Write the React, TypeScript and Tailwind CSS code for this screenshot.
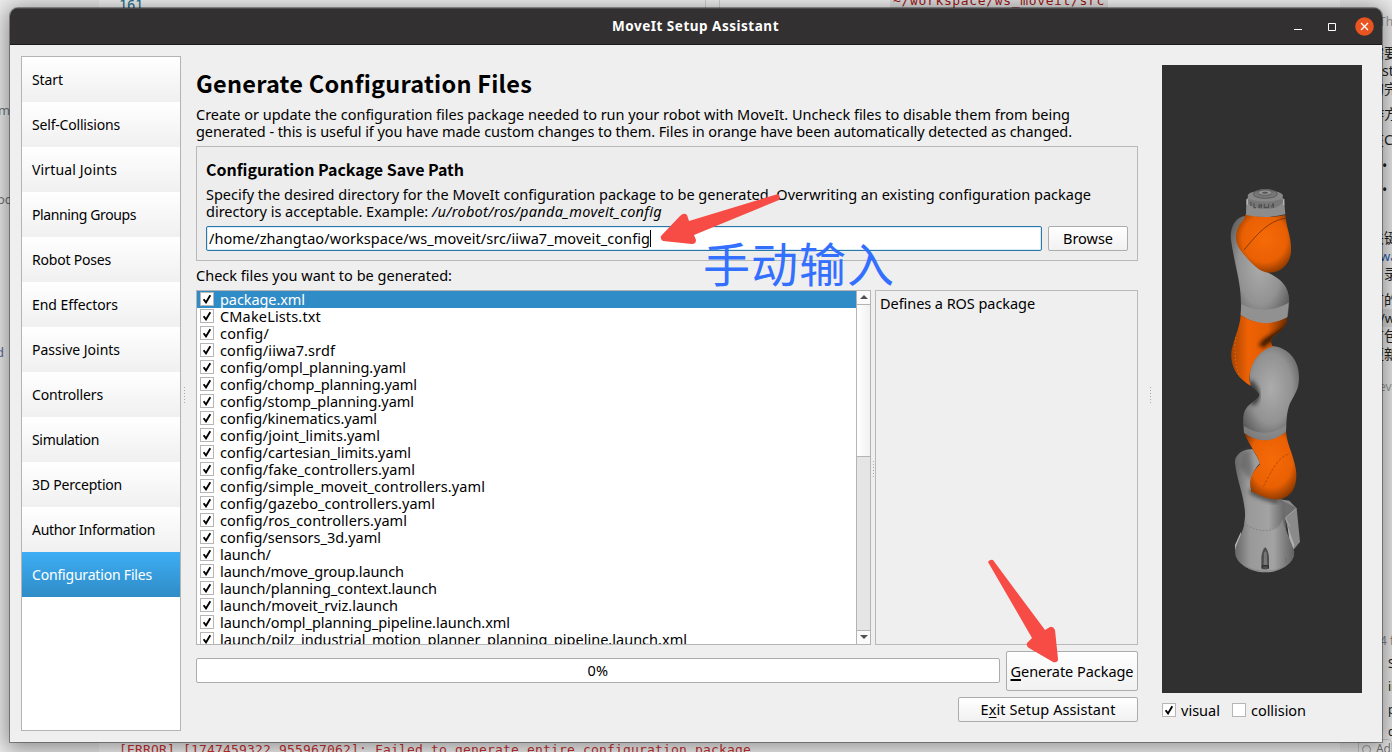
import { useLayoutEffect, useRef, useState, type ReactNode } from "react";

/** A single line of text tracked so that it fills the given width. */
function Line({ w, className = "", children }: { w: number; className?: string; children: ReactNode }) {
  const ref = useRef<HTMLSpanElement>(null);
  const [spacing, setSpacing] = useState(0);
  useLayoutEffect(() => {
    const el = ref.current;
    if (!el) return;
    const count = (el.textContent ?? "").length;
    setSpacing((w - el.getBoundingClientRect().width) / count);
  }, [w]);
  return (
    <span ref={ref} className={`inline-block shrink-0 whitespace-pre ${className}`} style={{ letterSpacing: `${spacing}px` }}>
      {children}
    </span>
  );
}

const steps: [string, number][] = [
  ["Start", 31],
  ["Self-Collisions", 88],
  ["Virtual Joints", 85],
  ["Planning Groups", 104],
  ["Robot Poses", 79],
  ["End Effectors", 86],
  ["Passive Joints", 88],
  ["Controllers", 71],
  ["Simulation", 67],
  ["3D Perception", 90],
  ["Author Information", 123],
  ["Configuration Files", 120],
];

const files: [string, number][] = [
  ["package.xml", 85],
  ["CMakeLists.txt", 101],
  ["config/", 49],
  ["config/iiwa7.srdf", 115],
  ["config/ompl_planning.yaml", 186],
  ["config/chomp_planning.yaml", 197],
  ["config/stomp_planning.yaml", 194],
  ["config/kinematics.yaml", 157],
  ["config/joint_limits.yaml", 160],
  ["config/cartesian_limits.yaml", 191],
  ["config/fake_controllers.yaml", 195],
  ["config/simple_moveit_controllers.yaml", 265],
  ["config/gazebo_controllers.yaml", 215],
  ["config/ros_controllers.yaml", 187],
  ["config/sensors_3d.yaml", 161],
  ["launch/", 51],
  ["launch/move_group.launch", 184],
  ["launch/planning_context.launch", 217],
  ["launch/moveit_rviz.launch", 178],
  ["launch/ompl_planning_pipeline.launch.xml", 290],
  ["launch/pilz_industrial_motion_planner_planning_pipeline.launch.xml", 467],
];

function Check({ on = true }: { on?: boolean }) {
  return (
    <span className="flex h-[14px] w-[14px] shrink-0 items-center justify-center border border-[#b6b6b6] bg-white">
      {on && (
        <svg width="10" height="10" viewBox="0 0 10 10" fill="none">
          <path d="M1.6 5.2 L4 8.4 L8.3 1.2" stroke="#000" strokeWidth="1.9" />
        </svg>
      )}
    </span>
  );
}

function Grip({ className }: { className: string }) {
  return (
    <span className={`flex flex-col gap-[2px] ${className}`}>
      {[0, 1, 2, 3, 4, 5].map((i) => (
        <i key={i} className="h-px w-px bg-[#a8a8a8]" />
      ))}
    </span>
  );
}

function Robot() {
  return (
    <svg width="200" height="628" viewBox="0 0 200 628" className="block">
      <defs>
        <linearGradient id="metal" x1="0" x2="1">
          <stop offset="0" stopColor="#666" />
          <stop offset=".25" stopColor="#999" />
          <stop offset=".65" stopColor="#a3a3a3" />
          <stop offset="1" stopColor="#606060" />
        </linearGradient>
        <radialGradient id="dome" cx=".5" cy=".45" r=".62">
          <stop offset="0" stopColor="#acacac" />
          <stop offset=".6" stopColor="#929292" />
          <stop offset="1" stopColor="#595959" />
        </radialGradient>
        <radialGradient id="head" cx=".52" cy=".42" r=".62">
          <stop offset="0" stopColor="#f76a08" />
          <stop offset=".65" stopColor="#e96003" />
          <stop offset="1" stopColor="#833500" />
        </radialGradient>
        <linearGradient id="sleeve" x1="0" x2="1">
          <stop offset="0" stopColor="#a84300" />
          <stop offset=".3" stopColor="#ef6204" />
          <stop offset=".65" stopColor="#e25c02" />
          <stop offset="1" stopColor="#6b2c00" />
        </linearGradient>
        <filter id="soft" x="-40%" y="-40%" width="180%" height="180%">
          <feGaussianBlur stdDeviation="7" />
        </filter>
        <clipPath id="c2"><path d="M122 405 Q190 450 262 412 C262 440 240 455 225 465 C212 475 210 485 218 500 C180 510 150 545 148 600 L152 618 C110 592 88 555 95 510 C104 470 120 440 122 405 Z" /></clipPath>
        <clipPath id="c3"><path d="M218 498 C265 503 297 540 297 590 C297 630 285 640 270 670 C258 700 260 730 258 755 Q195 805 132 758 C127 720 128 695 142 680 C160 662 181 655 178 642 C170 628 155 620 150 610 C143 560 165 510 218 498 Z" /></clipPath>
      </defs>
      <rect width="200" height="628" fill="#303030" />
      <g transform="translate(38 115) scale(.33333)">
        <path d="M240 958 L268 962 L290 985 L300 1085 L282 1108 L255 1015 Z" fill="#8a8a8a" />
        <path d="M240 958 L290 985 L256 1014 Z" fill="#6e6e6e" />
        <path d="M288 986 L256 1014 L270 1040" fill="none" stroke="#a8a8a8" strokeWidth="3" />
        <path d="M262 1035 L283 1095 L280 1110 L268 1080 Z" fill="#b0b0b0" />
        <path d="M123 1055 L105 1095 L106 1113 L122 1080 Z" fill="#bcbcbc" />
        <path d="M158 808 C130 806 101 825 105 850 C110 900 137 960 135 1010 L130 1060 L260 1060 C255 1010 255 985 235 950 L155 935 C145 900 160 870 180 850 C175 835 165 820 158 808 Z" fill="url(#metal)" />
        <path d="M158 808 C140 830 172 860 150 900 L120 860 L125 815 Z" fill="#5a5a5a" filter="url(#soft)" opacity=".6" />
        <path d="M150 932 Q200 960 235 962" stroke="#444" strokeWidth="14" fill="none" filter="url(#soft)" />
        <path d="M135 1022 C130 1060 110 1080 105 1115 C108 1150 150 1177 197 1177 C240 1177 282 1150 283 1115 C272 1080 255 1050 247 1018 Q240 1050 195 1051 Q148 1050 135 1022 Z" fill="url(#metal)" />
        <path d="M107 1125 Q120 1170 197 1174 Q270 1170 282 1125" stroke="#797979" strokeWidth="2" fill="none" />
        <path d="M140 1036 Q195 1066 240 1038" stroke="#777" strokeWidth="2" strokeDasharray="6 4" fill="none" />
        <path d="M184 1165 L184 1130 Q188 1106 196 1102 Q205 1110 207 1132 L207 1165 Q195 1172 184 1165 Z" fill="#4d4d4d" />
        <path d="M191 1155 L192 1118 Q197 1108 200 1120 L202 1155 Z" fill="#777" />
        <path d="M187 1166 V1157 H205 V1166" fill="none" stroke="#292929" strokeWidth="3" />
        <path d="M256 1133 Q261 1142 257 1149" fill="none" stroke="#666" strokeWidth="2" />
        <path d="M132 758 Q195 800 258 755 C262 800 280 820 288 870 C293 915 280 948 240 958 C210 963 180 945 155 935 C145 905 152 880 180 853 C180 835 150 800 132 758 Z" fill="url(#head)" />
        <path d="M190 920 L200 900 C220 865 235 830 270 821" stroke="#a44300" strokeWidth="2" strokeDasharray="9 4" fill="none" />
        <path d="M218 498 C265 503 297 540 297 590 C297 630 285 640 270 670 C258 700 260 730 258 755 Q195 805 132 758 C127 720 128 695 142 680 C160 662 181 655 178 642 C170 628 155 620 150 610 C143 560 165 510 218 498 Z" fill="url(#dome)" />
        <g clipPath="url(#c3)">
          <path d="M132 738 Q195 780 260 735 L260 800 L130 800 Z" fill="#929292" opacity=".6" />
          <path d="M148 605 Q190 645 155 672" stroke="#333" strokeWidth="16" fill="none" filter="url(#soft)" />
        </g>
        <path d="M136 108 C108 110 88 140 93 180 C99 220 106 250 112 280 C120 320 125 350 122 405 Q195 455 262 412 C268 390 269 365 266 345 C258 308 235 295 205 278 L130 215 Z" fill="url(#dome)" />
        <path d="M124 373 Q195 408 266 368 L262 412 Q195 452 122 405 Z" fill="#919191" />
        <path d="M122 405 Q190 450 262 412 C262 440 240 455 225 465 C212 475 210 485 218 500 C180 510 150 545 148 600 L152 618 C110 592 88 555 95 510 C104 470 120 440 122 405 Z" fill="url(#sleeve)" />
        <g clipPath="url(#c2)">
          <path d="M265 440 C235 470 195 475 185 500" stroke="#2d1300" strokeWidth="18" fill="none" filter="url(#soft)" />
          <path d="M108 460 Q98 540 122 600" stroke="#ff8a2c" strokeWidth="2" strokeDasharray="4 7" fill="none" />
        </g>
        <path d="M136 103 Q197 118 256 105 C260 150 275 170 273 215 C270 255 240 280 205 278 C175 276 150 245 125 215 C104 190 104 165 115 140 C124 125 134 120 136 103 Z" fill="url(#head)" />
        <path d="M132 210 C165 170 205 120 258 115" stroke="#703000" strokeWidth="2.4" fill="none" />
        <path d="M139 58 L162 36 Q195 18 230 36 L252 58 L256 103 Q197 118 138 105 Z" fill="#8c8c8c" />
        <path d="M139 58 Q142 85 197 87 Q248 85 252 58" fill="#777" />
        <ellipse cx="196" cy="48" rx="53" ry="17" fill="#878787" />
        <ellipse cx="196" cy="42" rx="36" ry="13" fill="#777" stroke="#5c5c5c" strokeWidth="3" />
        <ellipse cx="195" cy="38" rx="21" ry="8" fill="#939393" stroke="#606060" strokeWidth="3" />
        <ellipse cx="195" cy="38" rx="9" ry="3" fill="#555" />
        <path d="M142 58 V74 M251 58 V76" stroke="#b5b5b5" strokeWidth="4" />
        <path d="M153 66 V78 M162 70 V83 H168 M177 72 V85 L184 72 V85 M193 72 V82 H206 V72 M214 82 L220 70 V84" stroke="#505050" strokeWidth="3.5" fill="none" />
      </g>
    </svg>
  );
}

const button = "flex items-center justify-center rounded-[2px] border border-[#acacac] bg-gradient-to-b from-white to-[#f1f1f1]";

function Backdrop() {
  return (
    <div className="flex h-[752px] w-[1392px] overflow-hidden bg-[#f3f3f3] text-[13px] leading-[18px]">
      <div className="flex w-[99px] shrink-0 flex-col bg-[#eeeeee] text-[#777]">
        <span className="-ml-[2px] mt-[101px] whitespace-pre">mo</span>
        <span className="-ml-[3px] mt-[71px]">od</span>
        <span className="-ml-[4px] mt-[135px] text-[#5b6b9b]">d</span>
      </div>
      <div className="flex w-[621px] shrink-0 flex-col justify-between bg-[#f7f7f7] font-['DejaVu_Sans_Mono',monospace]">
        <div className="flex h-[14px] justify-between">
          <span className="-mt-[4px] ml-[20px] text-[14px] leading-[18px] text-[#237893]">
            <Line w={24}>161</Line>
          </span>
          <span className="w-[15px] border-x border-[#d5d5d5]" />
        </div>
        <span className="relative -mb-[7px] ml-[20px] text-[13px] leading-[18px] text-[#cd3131]">
          <Line w={632}>[ERROR] [1747459322.955967062]: Failed to generate entire configuration package</Line>
        </span>
      </div>
      <div className="flex w-[620px] shrink-0 flex-col bg-[#f7f7f7]">
        <span className="-mt-[8px] ml-[170px] w-[218px] bg-[#e4e4e4] pl-[3px] font-['DejaVu_Sans_Mono',monospace] text-[13px] text-[#a31515]">
          <Line w={212}>~/workspace/ws_moveit/src</Line>
        </span>
      </div>
      <div className="flex w-[52px] shrink-0 flex-col overflow-hidden whitespace-nowrap bg-[#ececec] pl-[30px] text-[14px] text-[#222]">
        <span className="mt-[13px] pl-[9px] text-[12px] text-[#999]">The</span>
        <span className="mt-[13px]">需要</span>
        <span className="pl-[12px]">st</span>
        <span>的完</span>
        <span className="mt-[7px]">作方</span>
        <span className="mt-[8px]">在C</span>
        <span className="mt-[8px] pl-[12px]">•</span>
        <span className="mt-[6px] pl-[12px]">•</span>
        <span className="mt-[30px]">关键</span>
        <span className="pl-[10px] text-[13px] text-[#275caa]">wa</span>
        <span>目录</span>
        <span className="mt-[8px]">有的</span>
        <span className="bg-[#d9d9d9] pl-[10px] text-[13px]">/w</span>
        <span>有包</span>
        <span>更新</span>
        <span className="mt-[15px] pl-[9px] text-[12px] text-[#999]">evi</span>
        <span className="mt-[236px] pl-[10px] text-[12px] text-[#888]">4 f</span>
        <span className="mt-[5px] pl-[18px] text-[12px]">S</span>
        <span className="mt-[5px] pl-[18px] text-[12px]">ii</span>
        <span className="mt-[5px] pl-[18px] text-[12px]">p</span>
        <span className="mt-[4px] pl-[18px] text-[12px]">c</span>
        <span className="-ml-[12px] -mt-[2px] flex h-[20px] shrink-0 items-center gap-[5px] rounded border border-[#c8c8c8] pl-[3px] text-[12px] text-[#777]">
          <i className="h-[9px] w-[9px] rounded-full border border-[#999]" />Ad
        </span>
      </div>
    </div>
  );
}

export default function App() {
  return (
    <div className="relative h-[752px] w-[1392px] overflow-hidden font-['Noto_Sans','Noto_Sans_CJK_SC',sans-serif] text-[14.5px] leading-[17px] text-black">
      <Backdrop />
      <div className="absolute left-[10px] top-[8px] flex h-[734px] w-[1372px] flex-col overflow-hidden rounded-t-[8px] bg-[#efefef] shadow-[0_0_0_1px_rgba(0,0,0,0.35),0_3px_22px_4px_rgba(0,0,0,0.42)]">
        <header className="flex h-[37px] shrink-0 items-center border-b border-t border-b-[#1c1a1b] border-t-[#4d4a4b] bg-[#333031] text-white">
          <div className="flex flex-1 pl-[602px] text-[13.5px] font-bold">
            <Line w={167}>MoveIt Setup Assistant</Line>
          </div>
          <div className="flex items-center pr-[8px]">
            <svg width="46" height="18" viewBox="0 0 46 18" fill="none" className="mr-[18px]">
              <path d="M3 11.5H11" stroke="#fff" />
              <path d="M37.5 5.5h7v7h-7z" stroke="#fff" />
            </svg>
            <svg width="19" height="19" viewBox="0 0 19 19">
              <circle cx="9.5" cy="9.5" r="9.3" fill="#e95420" />
              <path d="M6 6L13 13M13 6L6 13" stroke="#fff" strokeWidth="1.3" />
            </svg>
          </div>
        </header>

        <div className="flex min-h-0 flex-1">
          <nav className="ml-[11px] mt-[11px] flex h-[675px] w-[160px] shrink-0 flex-col border border-[#b4b4b4] bg-white text-[14px]">
            {steps.map(([label, w], i) => (
              <div
                key={label}
                className={
                  i === 11
                    ? "flex h-[45px] shrink-0 items-center bg-gradient-to-b from-[#3daef5] to-[#308cc6] pl-[10px] text-white"
                    : "flex h-[45px] shrink-0 items-center bg-gradient-to-b from-white to-[#f0f0f0] pl-[10px] shadow-[0_1px_0_#e8e8e8]"
                }
              >
                <Line w={w}>{label}</Line>
              </div>
            ))}
          </nav>
          <Grip className="ml-[3px] mt-[342px] w-px" />

          <main className="ml-[11px] mt-[20px] flex w-[942px] shrink-0 flex-col">
            <h1 className="flex h-[36px] items-center font-['Noto_Sans_CJK_SC',sans-serif] text-[23.5px] font-bold leading-[36px]">
              <Line w={336}>Generate Configuration Files</Line>
            </h1>
            <div className="mt-[5px] flex flex-col items-start">
              <Line w={874}>Create or update the configuration files package needed to run your robot with MoveIt. Uncheck files to disable them from being</Line>
              <Line w={876}>generated - this is useful if you have made custom changes to them. Files in orange have been automatically detected as changed.</Line>
            </div>

            <section className="mt-[6px] flex h-[115px] flex-col border border-[#b9b9b9] bg-[#ededed] px-[9px] pt-[10px]">
              <h2 className="flex h-[24px] items-center font-['Noto_Sans_CJK_SC',sans-serif] text-[16px] font-bold leading-[24px]">
                <Line w={258}>Configuration Package Save Path</Line>
              </h2>
              <div className="mt-[5px] flex flex-col items-start">
                <Line w={885}>Specify the desired directory for the MoveIt configuration package to be generated. Overwriting an existing configuration package</Line>
                <div className="flex">
                  <Line w={226}>directory is acceptable. Example: </Line>
                  <Line w={230} className="italic">/u/robot/ros/panda_moveit_config</Line>
                </div>
              </div>
              <div className="mt-[6px] flex gap-[6px]">
                <div className="flex h-[25px] w-[836px] items-center rounded-[2px] border border-[#2777a8] bg-white pl-[2px] shadow-[inset_0_0_0_1px_#dcebf5]">
                  <Line w={441}>/home/zhangtao/workspace/ws_moveit/src/iiwa7_moveit_config</Line>
                  <i className="h-[17px] w-px bg-black" />
                </div>
                <div className={`${button} h-[25px] w-[80px]`}>
                  <Line w={50}>Browse</Line>
                </div>
              </div>
            </section>

            <div className="mt-[5px] flex h-[18px] items-center">
              <Line w={256}>Check files you want to be generated:</Line>
            </div>

            <div className="mt-[6px] flex h-[355px]">
              <div className="flex w-[675px] shrink-0 border border-[#b4b4b4] bg-white">
                <div className="flex min-w-0 flex-1 flex-col overflow-hidden">
                  {files.map(([name, w], i) => (
                    <div
                      key={name}
                      className={
                        i === 0
                          ? "flex h-[17px] shrink-0 items-start gap-[6px] bg-[#308cc6] pl-[3px] text-white"
                          : "flex h-[17px] shrink-0 items-start gap-[6px] pl-[3px]"
                      }
                    >
                      <span className="mt-px flex"><Check /></span>
                      <Line w={w}>{name}</Line>
                    </div>
                  ))}
                </div>
                <div className="flex w-[14px] shrink-0 flex-col border-l border-[#b4b4b4] bg-[#e5e5e5]">
                  <div className="flex h-[14px] items-center justify-center border-b border-[#b4b4b4] bg-[#fafafa] pb-px">
                    <svg width="8" height="4" viewBox="0 0 8 4"><path d="M0 4L4 0L8 4Z" fill="#505050" /></svg>
                  </div>
                  <div className="h-[152px] border-b border-[#b4b4b4] bg-gradient-to-r from-white to-[#f1f1f1]" />
                  <div className="flex-1" />
                  <div className="flex h-[14px] items-center justify-center border-t border-[#b4b4b4] bg-[#fafafa] pb-px">
                    <svg width="8" height="4" viewBox="0 0 8 4"><path d="M0 0L4 4L8 0Z" fill="#505050" /></svg>
                  </div>
                </div>
              </div>
              <Grip className="ml-[2px] mt-[171px] w-px" />
              <div className="ml-px flex w-[263px] shrink-0 items-start border border-[#b9b9b9] pl-[4px] pt-[4px]">
                <Line w={155}>Defines a ROS package</Line>
              </div>
            </div>

            <div className="mt-[6px] flex items-start gap-[6px]">
              <div className="mt-[7px] flex h-[25px] w-[804px] items-center justify-center rounded-[2px] border border-[#acacac] bg-white">
                <Line w={21}>0%</Line>
              </div>
              <div className={`${button} h-[40px] w-[132px]`}>
                <Line w={123}><u className="underline-offset-2 decoration-2">G</u>enerate Package</Line>
              </div>
            </div>
            <div className={`${button} mt-[6px] h-[25px] w-[180px] self-end`}>
              <Line w={135}>E<u className="underline-offset-2">x</u>it Setup Assistant</Line>
            </div>
          </main>

          <Grip className="ml-[12px] mt-[342px] w-px" />
          <aside className="ml-[11px] mt-[20px] flex w-[200px] flex-col">
            <Robot />
            <div className="mt-[9px] flex items-start">
              <span className="mt-px flex"><Check /></span>
              <Line w={39} className="ml-[5px]">visual</Line>
              <span className="ml-[12px] mt-px flex"><Check on={false} /></span>
              <Line w={55} className="ml-[5px]">collision</Line>
            </div>
          </aside>
        </div>
      </div>

      <div className="pointer-events-none absolute left-[703px] top-[228px] font-['Noto_Sans_CJK_SC',sans-serif] text-[47px] font-normal leading-[68px] text-[#3370ff]">
        <Line w={192}>手动输入</Line>
      </div>
      <svg className="pointer-events-none absolute left-[655px] top-[185px]" width="130" height="65" viewBox="655 185 130 65">
        <path d="M778 194L689 221L687 215Q684 212 680 216L661 236Q660 239 663 241L692 244Q696 244 696 240L694 235L779 200Q781 196 778 194Z" fill="#f74b45" />
      </svg>
      <svg className="pointer-events-none absolute left-[980px] top-[555px]" width="85" height="110" viewBox="980 555 85 110">
        <path d="M988 562L1032 638L1027 643Q1026 646 1029 648L1053 662Q1058 663 1058 659L1055 630Q1053 626 1050 627L1045 630L993 560Q990 559 988 562Z" fill="#f74b45" />
      </svg>
    </div>
  );
}
